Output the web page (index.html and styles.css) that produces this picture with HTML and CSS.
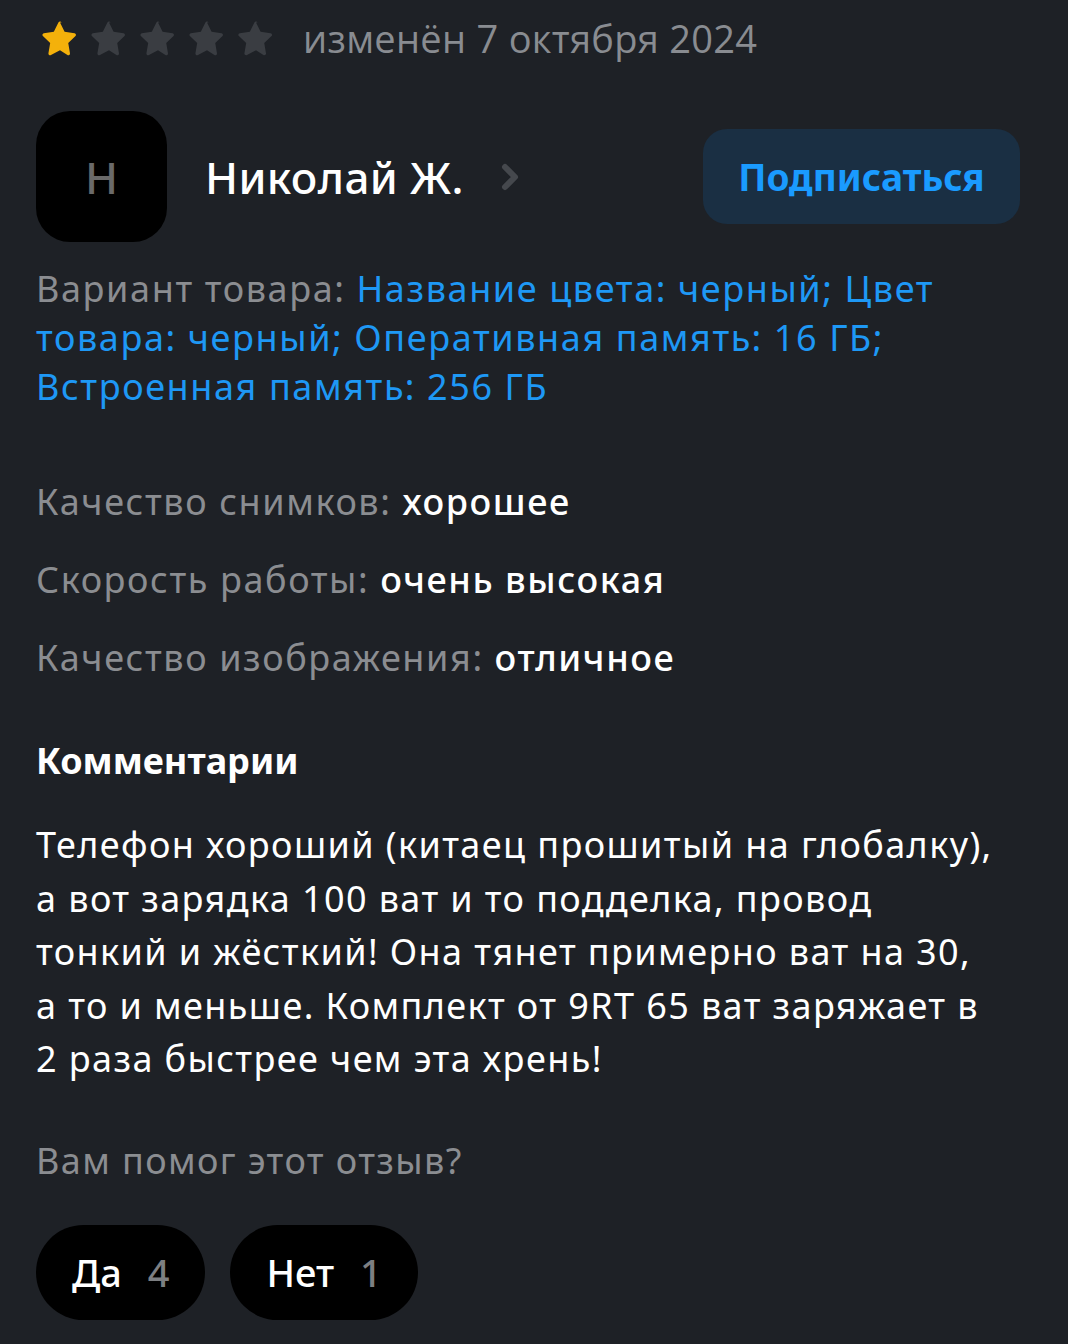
FILE: index.html
```html
<!DOCTYPE html>
<html lang="ru">

<head>
    <meta charset="UTF-8">
    <meta name="viewport" content="width=device-width, initial-scale=1.0">
    <title>Отзыв</title>
    <link rel="stylesheet" href="styles.css">
</head>

<body>
    <article class="review">
        <div class="review-top">
            <div class="stars">
                <svg class="star star-on" viewBox="0 0 24 24"><path d="M12 2.2l2.9 5.9 6.3.9c.9.1 1.2 1.2.6 1.8l-4.6 4.4 1.1 6.4c.2.9-.8 1.6-1.6 1.2L12 19.8l-5.7 3c-.8.4-1.8-.3-1.6-1.2l1.1-6.4-4.6-4.4c-.6-.6-.3-1.7.6-1.8l6.3-.9L11 2.2c.4-.8 1.6-.8 2 0z"/></svg>
                <svg class="star" viewBox="0 0 24 24"><path d="M12 2.2l2.9 5.9 6.3.9c.9.1 1.2 1.2.6 1.8l-4.6 4.4 1.1 6.4c.2.9-.8 1.6-1.6 1.2L12 19.8l-5.7 3c-.8.4-1.8-.3-1.6-1.2l1.1-6.4-4.6-4.4c-.6-.6-.3-1.7.6-1.8l6.3-.9L11 2.2c.4-.8 1.6-.8 2 0z"/></svg>
                <svg class="star" viewBox="0 0 24 24"><path d="M12 2.2l2.9 5.9 6.3.9c.9.1 1.2 1.2.6 1.8l-4.6 4.4 1.1 6.4c.2.9-.8 1.6-1.6 1.2L12 19.8l-5.7 3c-.8.4-1.8-.3-1.6-1.2l1.1-6.4-4.6-4.4c-.6-.6-.3-1.7.6-1.8l6.3-.9L11 2.2c.4-.8 1.6-.8 2 0z"/></svg>
                <svg class="star" viewBox="0 0 24 24"><path d="M12 2.2l2.9 5.9 6.3.9c.9.1 1.2 1.2.6 1.8l-4.6 4.4 1.1 6.4c.2.9-.8 1.6-1.6 1.2L12 19.8l-5.7 3c-.8.4-1.8-.3-1.6-1.2l1.1-6.4-4.6-4.4c-.6-.6-.3-1.7.6-1.8l6.3-.9L11 2.2c.4-.8 1.6-.8 2 0z"/></svg>
                <svg class="star" viewBox="0 0 24 24"><path d="M12 2.2l2.9 5.9 6.3.9c.9.1 1.2 1.2.6 1.8l-4.6 4.4 1.1 6.4c.2.9-.8 1.6-1.6 1.2L12 19.8l-5.7 3c-.8.4-1.8-.3-1.6-1.2l1.1-6.4-4.6-4.4c-.6-.6-.3-1.7.6-1.8l6.3-.9L11 2.2c.4-.8 1.6-.8 2 0z"/></svg>
            </div>
            <span class="date">изменён 7 октября 2024</span>
        </div>

        <div class="author">
            <div class="avatar">Н</div>
            <a class="author-name" href="#">Николай Ж.
                <svg class="chevron" viewBox="0 0 20 30"><path d="M5 5l10 10-10 10" fill="none" stroke="currentColor" stroke-width="6" stroke-linecap="round" stroke-linejoin="round"/></svg>
            </a>
            <button class="subscribe">Подписаться</button>
        </div>

        <p class="variant">
            <span class="label">Вариант товара:</span>
            <a href="#">Название цвета: черный; Цвет товара: черный; Оперативная память: 16 ГБ; Встроенная память: 256 ГБ</a>
        </p>

        <ul class="specs">
            <li><span class="label">Качество снимков:</span> хорошее</li>
            <li><span class="label">Скорость работы:</span> очень высокая</li>
            <li><span class="label">Качество изображения:</span> отличное</li>
        </ul>

        <h3 class="comment-title">Комментарии</h3>
        <p class="comment">Телефон хороший (китаец прошитый на глобалку), а&nbsp;вот зарядка 100 ват и то подделка, провод тонкий и жёсткий! Она тянет примерно ват на 30, а&nbsp;то и меньше. Комплект от 9RT 65 ват заряжает в 2&nbsp;раза быстрее чем эта хрень!</p>

        <p class="helpful">Вам помог этот отзыв?</p>
        <div class="votes">
            <button class="vote">Да <span class="count">4</span></button>
            <button class="vote">Нет <span class="count">1</span></button>
        </div>
    </article>
</body>

</html>
```

FILE: styles.css
```css
/* General Styles */
body {
    margin: 0;
    padding: 0;
    background-color: #1e2126;
    color: #fff;
    font-family: "Noto Sans", sans-serif;
}

.review {
    padding: 12px 48px 0 36px;
}

/* Rating and date */
.review-top {
    display: flex;
    align-items: center;
    gap: 28px;
    height: 52px;
}

.stars {
    display: flex;
    gap: 11px;
    padding-left: 5px;
}

.star {
    width: 38px;
    height: 38px;
    fill: #3a3d42;
}

.star-on {
    fill: #f4b10b;
}

.date {
    font-family: "Open Sans", sans-serif;
    font-size: 38px;
    color: #898c91;
    letter-spacing: 0.3px;
}

/* Author row */
.author {
    display: flex;
    align-items: center;
    margin-top: 47px;
}

.avatar {
    width: 131px;
    height: 131px;
    border-radius: 34px;
    background-color: #000;
    color: #6a6a6a;
    font-size: 44px;
    font-weight: 500;
    display: flex;
    align-items: center;
    justify-content: center;
}

.author-name {
    display: flex;
    align-items: center;
    gap: 36px;
    margin-left: 38px;
    color: #fff;
    text-decoration: none;
    font-size: 44px;
    font-weight: 500;
    letter-spacing: 0.4px;
}

.chevron {
    width: 20px;
    height: 30px;
    color: #45484d;
}

.subscribe {
    margin-left: auto;
    width: 317px;
    height: 95px;
    border: none;
    border-radius: 24px;
    background-color: #1a2f43;
    color: #1a9bff;
    font-family: inherit;
    font-size: 37px;
    font-weight: 700;
    cursor: pointer;
}

/* Variant */
.variant {
    margin: 22px 0 0;
    font-size: 36px;
    line-height: 49px;
    letter-spacing: 1.6px;
}

.label {
    color: #8b8d91;
}

.variant a {
    color: #1e98f5;
    text-decoration: none;
}

/* Specs */
.specs {
    list-style-type: none;
    padding: 0;
    margin: 52px 0 0;
    font-size: 36px;
    font-weight: 500;
    letter-spacing: 1.6px;
}

.specs li {
    line-height: 78px;
}

.specs .label {
    font-weight: 400;
}

/* Comment */
.comment-title {
    margin: 36px 0 0;
    font-size: 36px;
    font-weight: 700;
    line-height: 56px;
}

.comment {
    margin: 29px 12px 0 0;
    font-size: 36px;
    line-height: 53.6px;
    letter-spacing: 1.4px;
}

.helpful {
    margin: 50px 0 0;
    font-size: 36px;
    color: #8b8d91;
    letter-spacing: 1.4px;
}

/* Votes */
.votes {
    display: flex;
    gap: 25px;
    margin-top: 40px;
}

.vote {
    height: 95px;
    padding: 0 36px;
    border: none;
    border-radius: 48px;
    background-color: #000;
    color: #fff;
    font-family: inherit;
    font-size: 38px;
    font-weight: 500;
    cursor: pointer;
}

.vote .count {
    margin-left: 16px;
    color: #7d7f82;
}
```
